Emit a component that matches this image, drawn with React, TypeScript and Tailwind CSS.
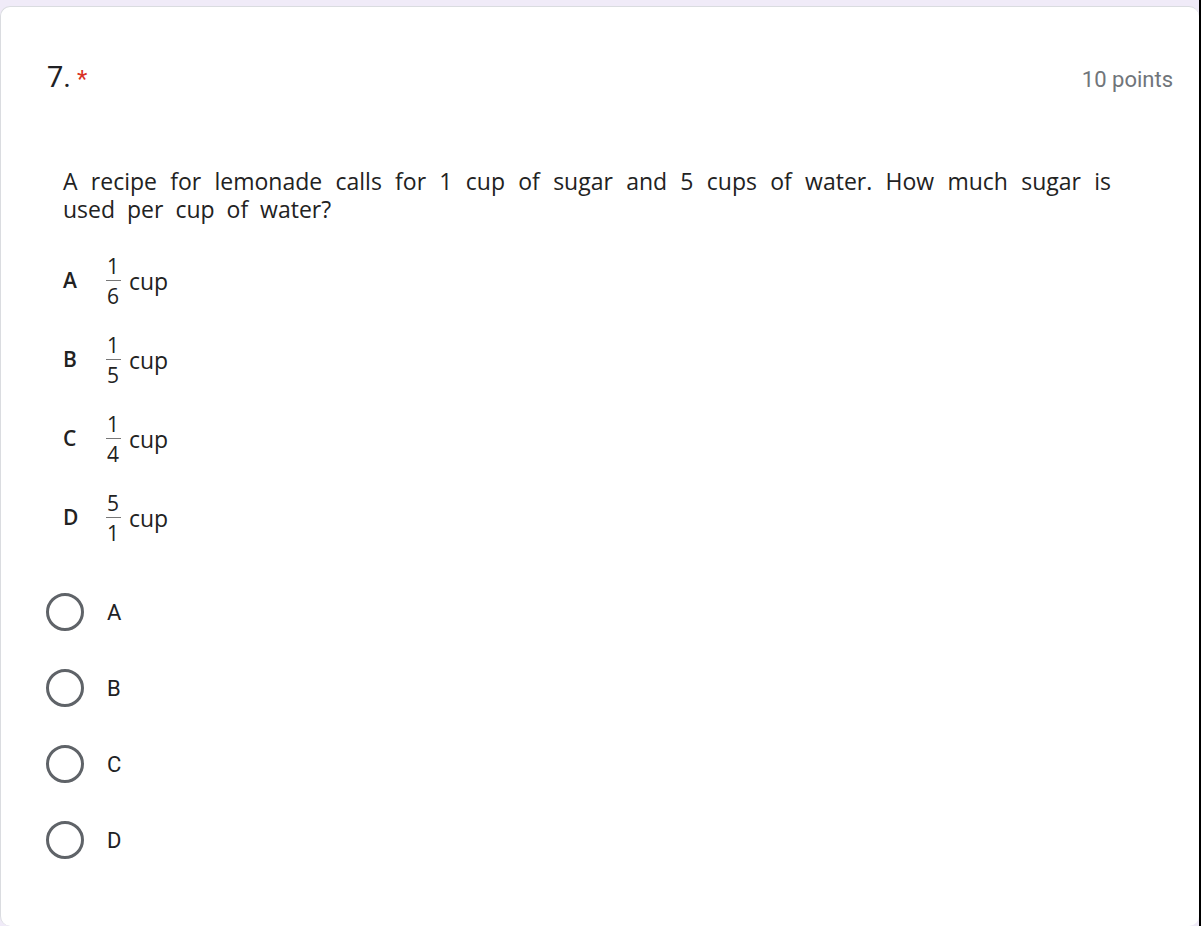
import React from "react";

const roboto = { fontFamily: "Roboto, 'Liberation Sans', sans-serif" };
const qfont = { fontFamily: "'Open Sans', 'Noto Sans', sans-serif" };

function Fraction({ num, den }: { num: string; den: string }) {
  return (
    <div className="flex flex-col items-center w-[18px]">
      <div className="text-[21px] leading-[16px]">{num}</div>
      <div className="mt-[6px] mb-[7px] h-px w-[15px] bg-[#777]" />
      <div className="text-[21px] leading-[16px]">{den}</div>
    </div>
  );
}

const choices = [
  { l: "A", n: "1", d: "6" },
  { l: "B", n: "1", d: "5" },
  { l: "C", n: "1", d: "4" },
  { l: "D", n: "5", d: "1" },
];

export default function App() {
  return (
    <div className="flex h-[926px] w-[1201px] overflow-hidden bg-[#f0ebf8]">
      <div className="flex-1 pt-[6px]">
        <div className="h-[920px] rounded-[10px] border-t border-l border-[#dadce0] bg-white pl-[46px] pr-[26px]">
          <div className="mt-[52px] flex items-baseline justify-between" style={roboto}>
            <div className="text-[29px] leading-[36px] text-[#202124]">
              7.<span className="ml-[6px] text-[24px] text-[#d93025]">*</span>
            </div>
            <div className="text-[22px] leading-[36px] text-[#70757a]">10 points</div>
          </div>

          <div className="mt-[69px] pl-[16px] text-[#222] text-[23px] leading-[28px]" style={qfont}>
            <div className="w-[1048px] text-justify [text-align-last:justify]">
              A recipe for lemonade calls for 1 cup of sugar and 5 cups of water. How much sugar is
            </div>
            <div className="[word-spacing:6px]">used per cup of water?</div>
          </div>

          <div className="mt-[18px] pl-[16px] text-[#222]" style={qfont}>
            {choices.map((c) => (
              <div key={c.l} className="flex h-[79px] items-center">
                <div className="w-[41px] text-[21px] font-semibold">{c.l}</div>
                <Fraction num={c.n} den={c.d} />
                <div className="ml-[7px] text-[23px] leading-[24px]">cup</div>
              </div>
            ))}
          </div>

          <div className="mt-[17px]" style={roboto}>
            {["A", "B", "C", "D"].map((l) => (
              <div key={l} className="flex h-[76px] items-center">
                <div className="ml-[-1px] h-[38px] w-[38px] rounded-full border-[3px] border-[#5f6368]" />
                <div className="ml-[23px] text-[22px] text-[#202124]">{l}</div>
              </div>
            ))}
          </div>
        </div>
      </div>
      <div className="w-[2px] bg-black" />
    </div>
  );
}
